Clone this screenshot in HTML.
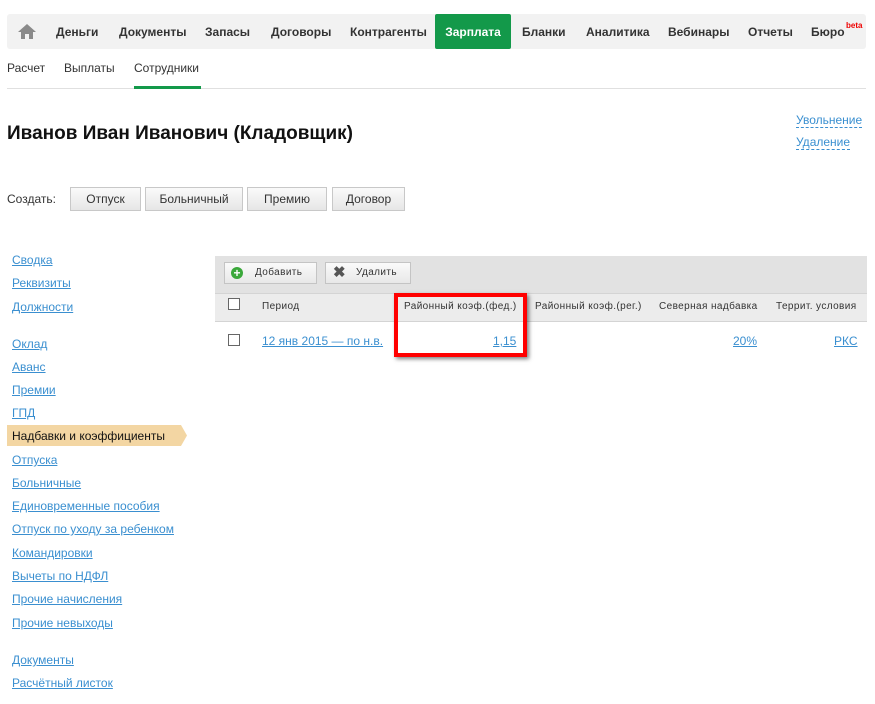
<!DOCTYPE html>
<html><head><meta charset="utf-8"><style>
body{margin:0;width:875px;height:704px;background:#fff;font-family:"Liberation Sans",Arial,sans-serif;position:relative;overflow:hidden}
.a{position:absolute;white-space:nowrap}
.nav{left:7px;top:14px;width:859px;height:35px;background:#f2f2f2;border-radius:3px}
.ni{top:14px;height:35px;line-height:36px;font-size:12px;font-weight:bold;color:#333}
.sub{top:61px;font-size:12px;color:#333}
.lk{color:#3a8fd0;text-decoration:underline;font-size:12px}
.btn{top:187px;height:22px;line-height:22px;font-size:12px;color:#333;background:linear-gradient(#fafafa,#e6e6e6);border:1px solid #c8c8c8;text-align:center}
.side{left:12px;font-size:12px;color:#3a8fd0;text-decoration:underline}
.th{top:301px;font-size:10px;color:#333;letter-spacing:.4px}
.cb{width:10px;height:10px;border:1px solid #666;background:#fff}
</style></head><body>
<div class="a nav"></div>
<svg class="a" style="left:17px;top:23px" width="20" height="17" viewBox="0 0 20 17"><path d="M10 1L1 9h3v7h4v-5h4v5h4V9h3z" fill="#8a8a8a"/></svg>
<div class="a ni" style="left:56px">Деньги</div>
<div class="a ni" style="left:119px">Документы</div>
<div class="a ni" style="left:205px">Запасы</div>
<div class="a ni" style="left:271px">Договоры</div>
<div class="a ni" style="left:350px">Контрагенты</div>
<div class="a ni" style="left:435px;width:76px;background:#13994a;color:#fff;text-align:center;border-radius:2px">Зарплата</div>
<div class="a ni" style="left:522px">Бланки</div>
<div class="a ni" style="left:586px">Аналитика</div>
<div class="a ni" style="left:668px">Вебинары</div>
<div class="a ni" style="left:748px">Отчеты</div>
<div class="a ni" style="left:811px">Бюро</div>
<div class="a" style="left:846px;top:21px;font-size:8px;color:#e00;font-weight:bold">beta</div>
<div class="a sub" style="left:7px">Расчет</div>
<div class="a sub" style="left:64px">Выплаты</div>
<div class="a sub" style="left:134px">Сотрудники</div>
<div class="a" style="left:7px;top:88px;width:859px;height:1px;background:#e0e0e0"></div>
<div class="a" style="left:134px;top:86px;width:67px;height:3px;background:#13994a"></div>
<div class="a" style="left:7px;top:123px;font-size:19px;font-weight:bold;color:#111">Иванов Иван Иванович (Кладовщик)</div>
<div class="a" style="left:796px;top:113px;font-size:12px;color:#3a8fd0;border-bottom:1px dashed #3a8fd0">Увольнение</div>
<div class="a" style="left:796px;top:135px;font-size:12px;color:#3a8fd0;border-bottom:1px dashed #3a8fd0">Удаление</div>
<div class="a" style="left:7px;top:192px;font-size:12px;color:#333">Создать:</div>
<div class="a btn" style="left:70px;width:69px">Отпуск</div>
<div class="a btn" style="left:145px;width:96px">Больничный</div>
<div class="a btn" style="left:247px;width:78px">Премию</div>
<div class="a btn" style="left:332px;width:71px">Договор</div>
<div class="a side" style="top:253px">Сводка</div>
<div class="a side" style="top:276px">Реквизиты</div>
<div class="a side" style="top:300px">Должности</div>
<div class="a side" style="top:337px">Оклад</div>
<div class="a side" style="top:360px">Аванс</div>
<div class="a side" style="top:383px">Премии</div>
<div class="a side" style="top:406px">ГПД</div>
<svg class="a" style="left:7px;top:425px" width="180" height="21"><path d="M0 0H174L180 10.5L174 21H0Z" fill="#f3d6a3"/></svg>
<div class="a" style="left:12px;top:429px;font-size:12px;color:#111">Надбавки и коэффициенты</div>
<div class="a side" style="top:453px">Отпуска</div>
<div class="a side" style="top:476px">Больничные</div>
<div class="a side" style="top:499px">Единовременные пособия</div>
<div class="a side" style="top:522px">Отпуск по уходу за ребенком</div>
<div class="a side" style="top:546px">Командировки</div>
<div class="a side" style="top:569px">Вычеты по НДФЛ</div>
<div class="a side" style="top:592px">Прочие начисления</div>
<div class="a side" style="top:616px">Прочие невыходы</div>
<div class="a side" style="top:653px">Документы</div>
<div class="a side" style="top:676px">Расчётный листок</div>
<div class="a" style="left:215px;top:256px;width:652px;height:64px;background:#e2e2e2"></div>
<div class="a" style="left:215px;top:293px;width:652px;height:27px;background:#ececec;border-top:1px solid #d4d4d4;border-bottom:1px solid #d4d4d4"></div>
<div class="a" style="left:224px;top:262px;width:91px;height:20px;background:linear-gradient(#fafafa,#e8e8e8);border:1px solid #c4c4c4"></div>
<div class="a" style="left:231px;top:267px;width:12px;height:12px;border-radius:50%;background:#3aa83a;color:#fff;font-size:12px;line-height:12px;text-align:center;font-weight:bold">+</div>
<div class="a" style="left:255px;top:267px;font-size:10px;color:#333;letter-spacing:.4px">Добавить</div>
<div class="a" style="left:325px;top:262px;width:84px;height:20px;background:linear-gradient(#fafafa,#e8e8e8);border:1px solid #c4c4c4"></div>
<div class="a" style="left:333px;top:263px;font-size:15px;font-weight:bold;color:#555">✖</div>
<div class="a" style="left:356px;top:267px;font-size:10px;color:#333;letter-spacing:.4px">Удалить</div>
<div class="a cb" style="left:228px;top:298px"></div>
<div class="a th" style="left:262px">Период</div>
<div class="a th" style="left:404px">Районный коэф.(фед.)</div>
<div class="a th" style="left:535px">Районный коэф.(рег.)</div>
<div class="a th" style="left:659px">Северная надбавка</div>
<div class="a th" style="left:776px">Террит. условия</div>
<div class="a cb" style="left:228px;top:334px"></div>
<div class="a lk" style="left:262px;top:334px">12 янв 2015 — по н.в.</div>
<div class="a lk" style="left:493px;top:334px">1,15</div>
<div class="a lk" style="left:733px;top:334px">20%</div>
<div class="a lk" style="left:834px;top:334px">РКС</div>
<div class="a" style="left:394px;top:293px;width:125px;height:56px;border:4px solid #f00;box-shadow:2px 2px 4px rgba(0,0,0,.5)"></div>
</body></html>
